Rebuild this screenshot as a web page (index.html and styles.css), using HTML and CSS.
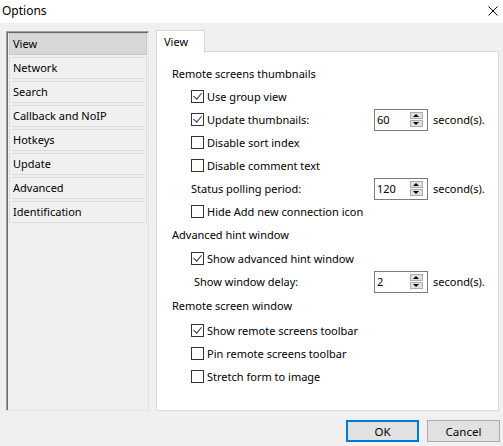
FILE: index.html
```html
<!DOCTYPE html>
<html lang="en">
<head>
    <meta charset="UTF-8">
    <title>Options</title>
    <link rel="stylesheet" href="styles.css">
</head>
<body>
    <!-- Title bar -->
    <div class="titlebar">
        <span class="title">Options</span>
        <svg class="close" width="10" height="10" viewBox="0 0 10 10"><path d="M0.5 0.5L9.5 9.5M9.5 0.5L0.5 9.5" stroke="#000" stroke-width="1" fill="none"/></svg>
    </div>

    <div class="main">
        <!-- Pages list -->
        <ul class="pages">
            <li class="selected">View</li>
            <li>Network</li>
            <li>Search</li>
            <li>Callback and NoIP</li>
            <li>Hotkeys</li>
            <li>Update</li>
            <li>Advanced</li>
            <li>Identification</li>
        </ul>

        <!-- Tab sheet -->
        <div class="sheet">
            <div class="tabs"><div class="tab">View</div></div>
            <div class="panel">
                <div class="row heading">Remote screens thumbnails</div>
                <div class="row check"><span class="box checked"></span>Use group view</div>
                <div class="row check">
                    <div class="field"><span class="box checked"></span>Update thumbnails:</div>
                    <div class="spin"><span>60</span><div class="spin-btns"><i class="up"></i><i class="down"></i></div></div>
                    <span class="unit">second(s).</span>
                </div>
                <div class="row check"><span class="box"></span>Disable sort index</div>
                <div class="row check"><span class="box"></span>Disable comment text</div>
                <div class="row check">
                    <div class="field">Status polling period:</div>
                    <div class="spin"><span>120</span><div class="spin-btns"><i class="up"></i><i class="down"></i></div></div>
                    <span class="unit">second(s).</span>
                </div>
                <div class="row check"><span class="box"></span>Hide Add new connection icon</div>

                <div class="row heading">Advanced hint window</div>
                <div class="row check shift"><span class="box checked"></span>Show advanced hint window</div>
                <div class="row check">
                    <div class="field delay">Show window delay:</div>
                    <div class="spin"><span>2</span><div class="spin-btns"><i class="up"></i><i class="down"></i></div></div>
                    <span class="unit">second(s).</span>
                </div>

                <div class="row heading shift">Remote screen window</div>
                <div class="row check shift2"><span class="box checked"></span>Show remote screens toolbar</div>
                <div class="row check"><span class="box"></span>Pin remote screens toolbar</div>
                <div class="row check"><span class="box"></span>Stretch form to image</div>
            </div>
        </div>
    </div>

    <!-- Buttons -->
    <div class="footer">
        <button class="btn default">OK</button>
        <button class="btn">Cancel</button>
    </div>
</body>
</html>
```

FILE: styles.css
```css
body {
    margin: 0;
    width: 503px;
    height: 446px;
    background-color: #F0F0F0;
    font-family: "Noto Sans", sans-serif;
    font-size: 11px;
    color: #000000;
    overflow: hidden;
}

.titlebar {
    height: 23px;
    background-color: #FFFFFF;
    display: flex;
    align-items: center;
    justify-content: space-between;
    padding: 0 5px 0 2px;
}

.titlebar .title {
    font-size: 12px;
    margin-top: -2px;
}

.titlebar .close {
    margin-top: -1px;
}

.main {
    display: flex;
    gap: 7px;
    padding: 8px 4px 0 6px;
    height: 380px;
}

/* Pages list */
.pages {
    list-style: none;
    margin: 0;
    padding: 1px 1px 0 2px;
    width: 138px;
    border: 1px solid;
    border-color: #A0A0A0 #E3E3E3 #E3E3E3 #A0A0A0;
    box-shadow: inset 1px 1px 0 #696969;
    display: flex;
    flex-direction: column;
    gap: 2px;
}

.pages li {
    height: 20px;
    line-height: 20px;
    padding-left: 3px;
    border: 1px solid #DCDCDC;
}

.pages li.selected {
    background-color: #D7D7D7;
    border-color: #C8C8C8;
}

/* Tab sheet */
.sheet {
    flex: 1;
    display: flex;
    flex-direction: column;
    margin-top: -1px;
}

.tabs {
    display: flex;
    height: 21px;
}

.tab {
    width: 40px;
    height: 22px;
    padding-left: 7px;
    line-height: 21px;
    background-color: #FFFFFF;
    border: 1px solid #D9D9D9;
    border-bottom: none;
    position: relative;
    z-index: 1;
}

.panel {
    height: 360px;
    background-color: #FFFFFF;
    border: 1px solid #D9D9D9;
    padding-top: 10px;
    box-sizing: border-box;
}

.row {
    height: 23px;
    display: flex;
    align-items: center;
}

.heading {
    padding-left: 15px;
}

.check {
    padding-left: 34px;
}

.shift {
    margin-top: 1px;
}

.shift2 {
    margin-top: 2px;
}

.box {
    width: 11px;
    height: 11px;
    border: 1px solid #333333;
    background-color: #FFFFFF;
    margin-right: 3px;
    flex-shrink: 0;
    position: relative;
}

.box.checked::after {
    content: "";
    position: absolute;
    left: 3px;
    top: 0px;
    width: 4px;
    height: 7px;
    border: solid #333333;
    border-width: 0 1px 1px 0;
    transform: rotate(40deg);
}

.field {
    width: 183px;
    display: flex;
    align-items: center;
}

.field.delay {
    width: 180px;
    margin-left: 3px;
}

/* Spin edit */
.spin {
    width: 46px;
    height: 20px;
    border: 1px solid #7A7A7A;
    background-color: #FFFFFF;
    display: flex;
    align-items: center;
    justify-content: space-between;
    padding: 0 4px 0 2px;
}

.spin-btns {
    display: flex;
    flex-direction: column;
    gap: 1px;
}

.spin-btns i {
    width: 11px;
    height: 5px;
    background-color: #E1E1E1;
    border: 1px solid #ADADAD;
    position: relative;
}

.spin-btns i::after {
    content: "";
    position: absolute;
    left: 2px;
    width: 0;
    height: 0;
    border-left: 3.5px solid transparent;
    border-right: 3.5px solid transparent;
}

.spin-btns .up::after {
    top: 1px;
    border-bottom: 3px solid #000000;
}

.spin-btns .down::after {
    top: 1px;
    border-top: 3px solid #000000;
}

.unit {
    margin-left: 5px;
}

/* Buttons */
.footer {
    display: flex;
    justify-content: flex-end;
    gap: 8px;
    padding: 9px 3px 0 0;
}

.btn {
    width: 73px;
    height: 22px;
    background-color: #E1E1E1;
    border: 1px solid #ADADAD;
    font-family: "Noto Sans", sans-serif;
    font-size: 11.5px;
    color: #000000;
    padding: 0;
}

.btn.default {
    border: 2px solid #0078D7;
}
```
